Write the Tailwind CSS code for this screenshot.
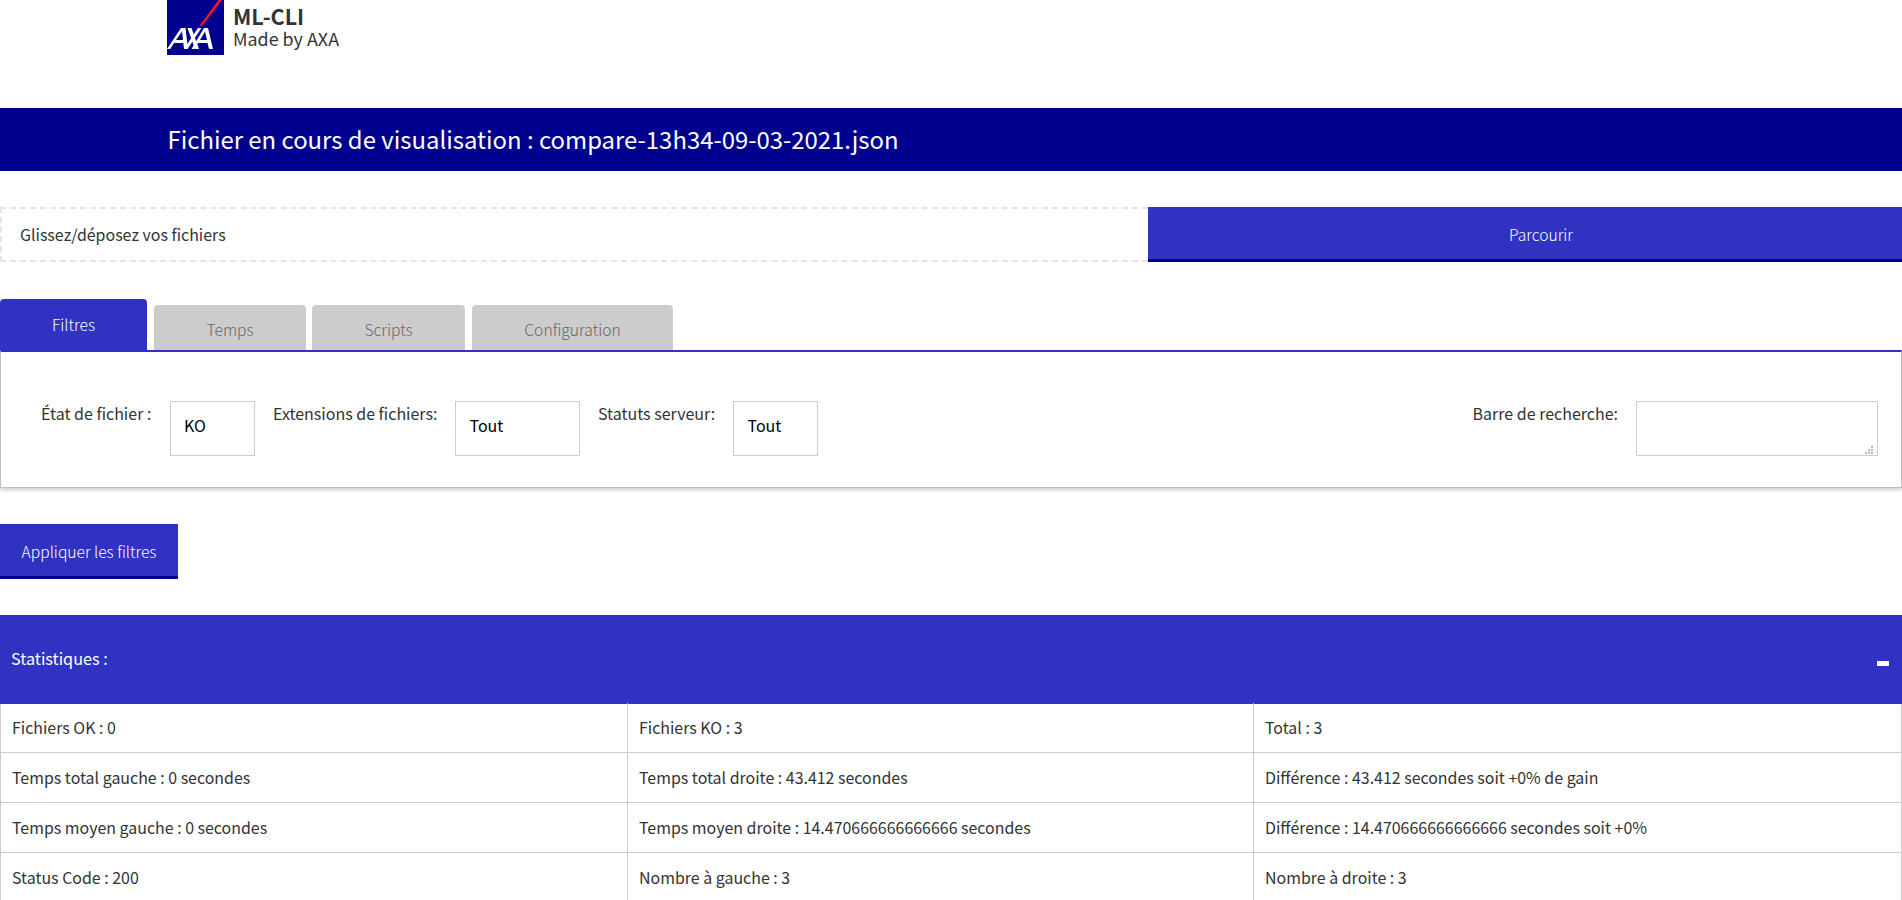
<!DOCTYPE html>
<html lang="fr"><head><meta charset="utf-8"><title>ML-CLI</title>
<script src="https://cdn.jsdelivr.net/npm/@tailwindcss/browser@4"></script></head>
<body class="h-[900px] overflow-hidden bg-white font-['Noto_Sans_CJK_SC','Noto_Sans',sans-serif] text-base leading-6 text-[#333]">
<header class="flex h-[108px] items-start pl-[167px]">
  <svg class="h-[55px] w-[57px]" viewBox="0 0 57 55"><rect width="57" height="55" fill="#00008f"/><path d="M32.500 26 51.500 0H55L35 26Z" fill="#ff1721"/><g fill="#fff"><path d="M0 49 14 28H18.500L21 49H17L16.300 43H7L3.200 49ZM9 40H16L15 31.500Z"/><path d="M20.500 28H24.500L32 49H28Z"/><path d="M17 49 31 28H34.500L20.500 49Z"/><path d="M24.500 49 37 28H41L46 49H42L40.500 43H31L27.500 49ZM33 40H40L38 31.500Z"/></g></svg>
  <div class="pt-1 pl-[9px]"><div class="h-6 text-[21.5px] font-bold">ML-CLI</div><div class="h-6 text-[17.9px] leading-5">Made by AXA</div></div>
</header>
<h1 class="flex h-[63px] items-center bg-[#00008f] pb-0.5 pl-[167.500px] text-[23.9px] text-white">Fichier en cours de visualisation : compare-13h34-09-03-2021.json</h1>
<div class="mt-9 flex h-[55px]">
  <div class="flex w-[1148px] items-center border-2 border-r-0 border-dashed border-[#e5e5e5] pb-0.5 pl-[18px] text-[15.95px]">Glissez/déposez vos fichiers</div>
  <button class="flex-1 border-b-[3px] border-[#00008f] bg-[#3032c1] pt-1 pl-8 text-[15.65px] font-light text-white">Parcourir</button>
</div>
<nav class="mt-[37px] flex h-[51px] items-end text-[15.65px] font-light text-[#666]">
  <div class="mr-[7px] flex h-[51px] w-[147px] items-center justify-center rounded-t bg-[#3032c1] text-white">Filtres</div>
  <div class="mr-[6px] flex h-[45px] w-[152px] items-center justify-center rounded-t bg-[#ccc] pt-1">Temps</div>
  <div class="mr-[7px] flex h-[45px] w-[153px] items-center justify-center rounded-t bg-[#ccc] pt-1">Scripts</div>
  <div class="flex h-[45px] w-[201px] items-center justify-center rounded-t bg-[#ccc] pt-1">Configuration</div>
</nav>
<section class="flex h-[138px] items-start border border-t-2 border-[#bfbfbf] border-t-[#3032c1] pt-[49px] pr-[23px] pl-10 shadow-[0_2px_4px_rgba(0,0,0,0.2)]">
  <label class="w-[129px]">État de fichier :</label>
  <div class="flex h-[55px] w-[85px] items-center border border-[#ccc] pb-2 pl-[13px] text-black">KO</div>
  <label class="w-[200px] pl-[18px]">Extensions de fichiers:</label>
  <div class="flex h-[55px] w-[125px] items-center border border-[#ccc] pb-2 pl-[13.500px] text-black">Tout</div>
  <label class="w-[153px] pl-[18px]">Statuts serveur:</label>
  <div class="flex h-[55px] w-[85px] items-center border border-[#ccc] pb-2 pl-[13.500px] text-black">Tout</div>
  <label class="mr-[18px] ml-auto">Barre de recherche:</label>
  <div class="flex h-[55px] w-[242px] items-end justify-end border border-[#ccc] pr-1 pb-px"><svg class="size-2" viewBox="0 0 8 8" fill="#bbb"><path d="M6 0h2v2h-2zM3 3h2v2h-2zM6 3h2v2h-2zM0 6h2v2h-2zM3 6h2v2h-2zM6 6h2v2h-2z"/></svg></div>
</section>
<button class="mt-9 block h-[55px] w-[178px] border-b-[3px] border-[#00008f] bg-[#3032c1] pt-1 text-[15.65px] font-light text-white">Appliquer les filtres</button>
<div class="mt-9 flex h-[89px] items-center justify-between bg-[#3032c1] pr-[13px] pl-[11px] text-white"><span class="pb-[3px] text-[16.2px]">Statistiques :</span><i class="mt-[8px] block h-[5px] w-[12px] bg-white"></i></div>
<div class="grid grid-cols-[627px_626px_1fr] border-x border-[#ccc] text-[15.95px] [&>div]:h-[50px] [&>div]:border-b [&>div]:border-[#ccc] [&>div]:pt-[12px] [&>div]:pl-[11px]">
  <div class="-mt-px border-r">Fichiers OK : 0</div><div class="-mt-px border-r">Fichiers KO : 3</div><div class="-mt-px">Total : 3</div>
  <div class="border-r">Temps total gauche : 0 secondes</div><div class="border-r">Temps total droite : 43.412 secondes</div><div>Différence : 43.412 secondes soit +0% de gain</div>
  <div class="border-r">Temps moyen gauche : 0 secondes</div><div class="border-r">Temps moyen droite : 14.470666666666666 secondes</div><div>Différence : 14.470666666666666 secondes soit +0%</div>
  <div class="border-r">Status Code : 200</div><div class="border-r">Nombre à gauche : 3</div><div>Nombre à droite : 3</div>
</div>
</body></html>
